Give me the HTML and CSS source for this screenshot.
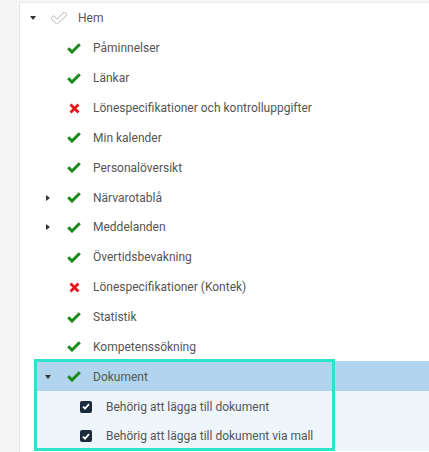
FILE: index.html
```html
<!DOCTYPE html>
<html lang="sv">
<head>
<meta charset="utf-8">
<link rel="stylesheet" href="styles.css">
</head>
<body>
<div class="panel">
  <div class="row lvl0">
    <span class="caret down"></span>
    <span class="icon"><svg width="16" height="12" viewBox="110 380 1580 1070"><path d="M1671 566q0 40-28 68l-724 724-136 136q-28 28-68 28t-68-28l-136-136-362-362q-28-28-28-68t28-68l136-136q28-28 68-28t68 28l294 295 656-657q28-28 68-28t68 28l136 136q28 28 28 68z" fill="none" stroke="#a0a0a0" stroke-width="80"/></svg></span>
    <span class="label">Hem</span>
  </div>
  <div class="children">
    <div class="row lvl1"><span class="caret"></span><span class="icon ok"><svg width="14" height="11" viewBox="0 0 14 11"><path d="M1.2 5.2 L5 9 L12.8 1.2"/></svg></span><span class="label">Påminnelser</span></div>
    <div class="row lvl1"><span class="caret"></span><span class="icon ok"><svg width="14" height="11" viewBox="0 0 14 11"><path d="M1.2 5.2 L5 9 L12.8 1.2"/></svg></span><span class="label">Länkar</span></div>
    <div class="row lvl1"><span class="caret"></span><span class="icon no"><svg width="11" height="11" viewBox="0 0 11 11"><path d="M1.5 1.5 L9.5 9.5 M9.5 1.5 L1.5 9.5"/></svg></span><span class="label">Lönespecifikationer och kontrolluppgifter</span></div>
    <div class="row lvl1"><span class="caret"></span><span class="icon ok"><svg width="14" height="11" viewBox="0 0 14 11"><path d="M1.2 5.2 L5 9 L12.8 1.2"/></svg></span><span class="label">Min kalender</span></div>
    <div class="row lvl1"><span class="caret"></span><span class="icon ok"><svg width="14" height="11" viewBox="0 0 14 11"><path d="M1.2 5.2 L5 9 L12.8 1.2"/></svg></span><span class="label">Personalöversikt</span></div>
    <div class="row lvl1"><span class="caret right"></span><span class="icon ok"><svg width="14" height="11" viewBox="0 0 14 11"><path d="M1.2 5.2 L5 9 L12.8 1.2"/></svg></span><span class="label">Närvarotablå</span></div>
    <div class="row lvl1"><span class="caret right"></span><span class="icon ok"><svg width="14" height="11" viewBox="0 0 14 11"><path d="M1.2 5.2 L5 9 L12.8 1.2"/></svg></span><span class="label">Meddelanden</span></div>
    <div class="row lvl1"><span class="caret"></span><span class="icon ok"><svg width="14" height="11" viewBox="0 0 14 11"><path d="M1.2 5.2 L5 9 L12.8 1.2"/></svg></span><span class="label">Övertidsbevakning</span></div>
    <div class="row lvl1"><span class="caret"></span><span class="icon no"><svg width="11" height="11" viewBox="0 0 11 11"><path d="M1.5 1.5 L9.5 9.5 M9.5 1.5 L1.5 9.5"/></svg></span><span class="label">Lönespecifikationer (Kontek)</span></div>
    <div class="row lvl1"><span class="caret"></span><span class="icon ok"><svg width="14" height="11" viewBox="0 0 14 11"><path d="M1.2 5.2 L5 9 L12.8 1.2"/></svg></span><span class="label">Statistik</span></div>
    <div class="row lvl1"><span class="caret"></span><span class="icon ok"><svg width="14" height="11" viewBox="0 0 14 11"><path d="M1.2 5.2 L5 9 L12.8 1.2"/></svg></span><span class="label">Kompetenssökning</span></div>
    <div class="group">
      <div class="row lvl1 selected"><span class="caret down"></span><span class="icon ok"><svg width="14" height="11" viewBox="0 0 14 11"><path d="M1.2 5.2 L5 9 L12.8 1.2"/></svg></span><span class="label">Dokument</span></div>
      <div class="row lvl2"><span class="checkbox"><svg width="8" height="7" viewBox="0 0 8 7"><path d="M1 3.6 L3 5.6 L7 1.2"/></svg></span><span class="label">Behörig att lägga till dokument</span></div>
      <div class="row lvl2"><span class="checkbox"><svg width="8" height="7" viewBox="0 0 8 7"><path d="M1 3.6 L3 5.6 L7 1.2"/></svg></span><span class="label">Behörig att lägga till dokument via mall</span></div>
    </div>
  </div>
  <div class="focus-box"></div>
</div>
</body>
</html>
```
FILE: styles.css
```css
html, body {
  margin: 0;
  padding: 0;
}
body {
  background: #f5f5f5;
  font-family: Roboto, "Liberation Sans", sans-serif;
  font-size: 12px;
  color: #555;
  width: 429px;
  height: 452px;
  overflow: hidden;
}
.panel {
  position: relative;
  margin: 2px 0 0 19px;
  border-left: 1px solid #e6e6e6;
  border-top: 1px solid #ececec;
  background: #fff;
  height: 460px;
}
.children {
  margin-left: 15px;
}
.row {
  height: 29.86px;
  display: flex;
  align-items: center;
  white-space: nowrap;
}
.lvl0 { padding-left: 7px; padding-top: 1px; box-sizing: border-box; }
.lvl1 { padding-left: 7px; padding-top: 1px; box-sizing: border-box; }
.lvl2 { padding-left: 45px; padding-top: 1px; box-sizing: border-box; }
.caret {
  width: 12px;
  height: 12px;
  flex: none;
  display: flex;
  align-items: center;
  justify-content: center;
}
.caret.down::before {
  content: "";
  border-left: 3.5px solid transparent;
  border-right: 3.5px solid transparent;
  border-top: 4px solid #333;
}
.caret.right::before {
  content: "";
  border-top: 3.5px solid transparent;
  border-bottom: 3.5px solid transparent;
  border-left: 4px solid #333;
}
.icon {
  width: 16px;
  margin-left: 12px;
  margin-right: 11px;
  flex: none;
  display: flex;
  align-items: center;
  justify-content: center;
}
.icon svg { display: block; }
.ok path {
  fill: none;
  stroke: #1a8a1a;
  stroke-width: 3;
}
.no path {
  fill: none;
  stroke: #e8141c;
  stroke-width: 2.8;
}
.group {
  background: #eef6fc;
}
.selected {
  background: #b1d5ef;
}
.checkbox {
  width: 12px;
  height: 12px;
  border-radius: 2px;
  background: #1c2b3b;
  flex: none;
  margin-right: 14px;
  display: flex;
  align-items: center;
  justify-content: center;
}
.checkbox svg { display: block; }
.checkbox path {
  fill: none;
  stroke: #fff;
  stroke-width: 1.8;
}
.label {
  line-height: 16px;
}
.focus-box {
  position: absolute;
  left: 14px;
  top: 356px;
  width: 301px;
  height: 92px;
  box-sizing: border-box;
  border: 3px solid #2de3c9;
  pointer-events: none;
}
```
